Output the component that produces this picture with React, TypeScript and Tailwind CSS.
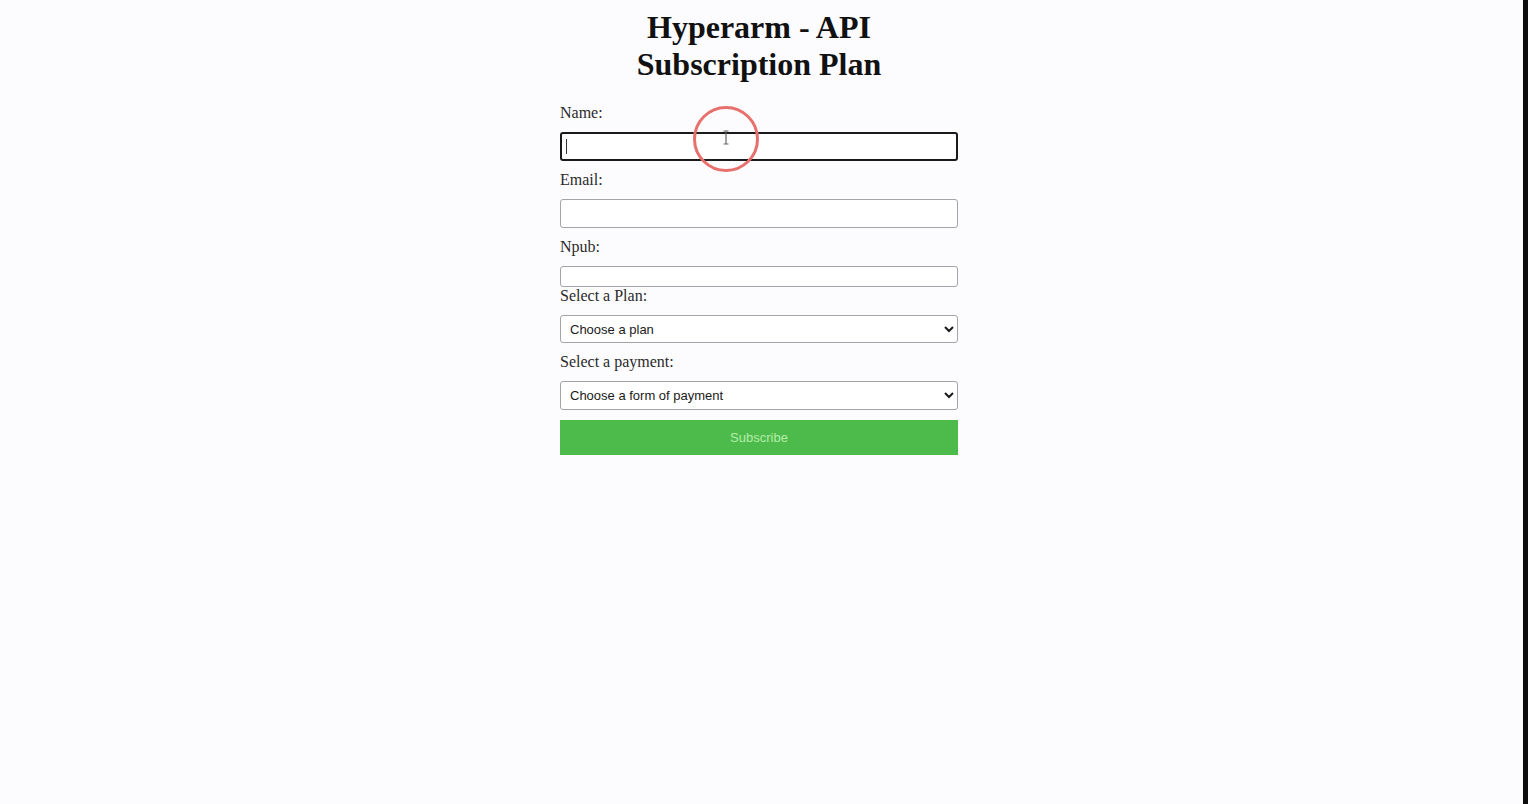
import React from "react";

export default function App() {
  const labelCls =
    "block text-[16px] leading-[18px] text-[#2a2a2a] mb-[10px] font-['Liberation_Serif',serif]";
  const inputCls =
    "block w-full h-[29px] border border-[#a4a4a8] rounded-[3px] bg-white mb-[10px]";
  const selectCls =
    "block w-full border border-[#a4a4a8] rounded-[3px] bg-white mb-[10px] pl-[5px] pr-[4px] text-[13px] text-[#1a1a1a] font-['Liberation_Sans',Arial,sans-serif]";
  return (
    <div className="flex w-full h-[804px] bg-[#fcfcff] overflow-hidden">
      <div className="flex-1 flex justify-center pr-[5px] relative">
        <div className="w-[398px] pt-[9px]">
          <h1 className="text-[32px] leading-[37px] font-bold text-center text-[#111] mb-[21px] font-['Liberation_Serif',serif]">
            Hyperarm - API Subscription Plan
          </h1>
          <form className="flex flex-col" onSubmit={(e) => e.preventDefault()}>
            <label className={labelCls}>Name:</label>
            <div className="relative">
              <input
                type="text"
                className="block w-full h-[29px] border-2 border-[#1a1a1a] rounded-[3px] bg-white mb-[10px] outline-none"
              />
              <div className="absolute left-[6px] top-[7px] w-[1px] h-[15px] bg-[#333]" />
            </div>
            <label className={labelCls}>Email:</label>
            <input type="email" className={inputCls} />
            <label className={labelCls}>Npub:</label>
            <input
              type="text"
              className="block w-full h-[21px] border border-[#a4a4a8] rounded-[3px] bg-white"
            />
            <label className={labelCls}>Select a Plan:</label>
            <select className={selectCls + " h-[28px]"} defaultValue="">
              <option value="">Choose a plan</option>
            </select>
            <label className={labelCls}>Select a payment:</label>
            <select className={selectCls + " h-[29px]"} defaultValue="">
              <option value="">Choose a form of payment</option>
            </select>
            <button
              type="submit"
              className="block w-full h-[35px] bg-[#4dbb4b] text-[#b4ecaa] text-[13px] font-['Liberation_Sans',Arial,sans-serif]"
            >
              Subscribe
            </button>
          </form>
        </div>
        <svg
          className="absolute left-[692px] top-[105px]"
          width="70"
          height="70"
          viewBox="0 0 70 70"
        >
          <circle cx="34" cy="34" r="31.5" fill="none" stroke="#e8706c" strokeWidth="3" />
          <path
            d="M31.5 26 H36.5 M34 26 V39 M31.5 39 H36.5"
            stroke="#666"
            strokeWidth="1.2"
            fill="none"
          />
        </svg>
      </div>
      <div className="w-[5px] bg-[#0d0d0d]" />
    </div>
  );
}
